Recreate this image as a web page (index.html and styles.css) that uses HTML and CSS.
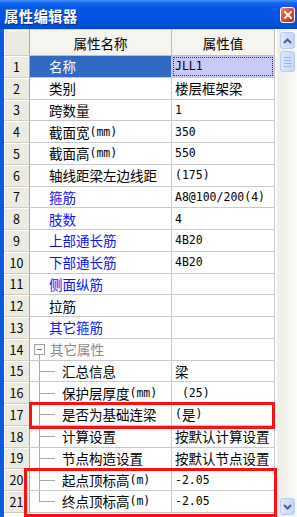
FILE: index.html
```html
<!DOCTYPE html>
<html lang="zh-CN">
<head>
    <meta charset="UTF-8">
    <meta name="viewport" content="width=device-width, initial-scale=1.0">
    <title>属性编辑器</title>
    <link rel="stylesheet" href="styles.css">
</head>
<body>
    <div class="window">
        <div class="titlebar">
            <span class="title">属性编辑器</span>
            <span class="close">
                <svg width="8" height="8" viewBox="0 0 8 8"><path d="M1 1L7 7M7 1L1 7" stroke="#fff" stroke-width="2" stroke-linecap="square"/></svg>
            </span>
        </div>

        <div class="frame">
            <div class="grid">
                <div class="row head">
                    <div class="num"></div>
                    <div class="name">属性名称</div>
                    <div class="val">属性值</div>
                </div>
                <div class="row selected">
                    <div class="num">1</div>
                    <div class="name">名称</div>
                    <div class="val"><span class="focus"><span class="en">JLL1</span></span></div>
                </div>
                <div class="row"><div class="num">2</div><div class="name">类别</div><div class="val">楼层框架梁</div></div>
                <div class="row"><div class="num">3</div><div class="name">跨数量</div><div class="val"><span class="en">1</span></div></div>
                <div class="row"><div class="num">4</div><div class="name">截面宽<span class="en">(mm)</span></div><div class="val"><span class="en">350</span></div></div>
                <div class="row"><div class="num">5</div><div class="name">截面高<span class="en">(mm)</span></div><div class="val"><span class="en">550</span></div></div>
                <div class="row"><div class="num">6</div><div class="name">轴线距梁左边线距</div><div class="val"><span class="en">(175)</span></div></div>
                <div class="row"><div class="num">7</div><div class="name link">箍筋</div><div class="val"><span class="en">A8@100/200(4)</span></div></div>
                <div class="row"><div class="num">8</div><div class="name link">肢数</div><div class="val"><span class="en">4</span></div></div>
                <div class="row"><div class="num">9</div><div class="name link">上部通长筋</div><div class="val"><span class="en">4B20</span></div></div>
                <div class="row"><div class="num">10</div><div class="name link">下部通长筋</div><div class="val"><span class="en">4B20</span></div></div>
                <div class="row"><div class="num">11</div><div class="name link">侧面纵筋</div><div class="val"></div></div>
                <div class="row"><div class="num">12</div><div class="name">拉筋</div><div class="val"></div></div>
                <div class="row"><div class="num">13</div><div class="name link">其它箍筋</div><div class="val"></div></div>
                <div class="row">
                    <div class="num">14</div>
                    <div class="name group"><span class="node"><span class="box"><span class="minus"></span></span></span><span class="group-label">其它属性</span></div>
                    <div class="val"></div>
                </div>
                <div class="row"><div class="num">15</div><div class="name tree"><span class="branch"></span>汇总信息</div><div class="val">梁</div></div>
                <div class="row"><div class="num">16</div><div class="name tree"><span class="branch"></span>保护层厚度<span class="en">(mm)</span></div><div class="val"><span class="en">&nbsp;(25)</span></div></div>
                <div class="row"><div class="num">17</div><div class="name tree"><span class="branch"></span>是否为基础连梁</div><div class="val"><span class="en">(</span>是<span class="en">)</span></div></div>
                <div class="row"><div class="num">18</div><div class="name tree"><span class="branch"></span>计算设置</div><div class="val">按默认计算设置</div></div>
                <div class="row"><div class="num">19</div><div class="name tree"><span class="branch"></span>节点构造设置</div><div class="val">按默认节点设置</div></div>
                <div class="row"><div class="num">20</div><div class="name tree"><span class="branch"></span>起点顶标高<span class="en">(m)</span></div><div class="val"><span class="en">-2.05</span></div></div>
                <div class="row"><div class="num">21</div><div class="name tree"><span class="branch last"></span>终点顶标高<span class="en">(m)</span></div><div class="val"><span class="en">-2.05</span></div></div>
            </div>

            <div class="gap"></div>

            <div class="scrollbar">
                <div class="sb-btn">
                    <svg width="9" height="6" viewBox="0 0 9 6"><path d="M1 5L4.5 1.5L8 5" fill="none" stroke="#4d6185" stroke-width="2"/></svg>
                </div>
                <div class="thumb"><span></span><span></span><span></span><span></span></div>
                <div class="track"></div>
                <div class="sb-btn">
                    <svg width="9" height="6" viewBox="0 0 9 6"><path d="M1 1L4.5 4.5L8 1" fill="none" stroke="#4d6185" stroke-width="2"/></svg>
                </div>
            </div>
        </div>

        <div class="mark mark-one"></div>
        <div class="mark mark-two"></div>
    </div>
</body>
</html>
```

FILE: styles.css
```css
body {
    margin: 0;
    padding: 0;
    overflow: hidden;
    background: #ffffff;
    font-family: "Noto Sans CJK SC", "Noto Sans", sans-serif;
    font-size: 13.5px;
    color: #000000;
}
.window {
    position: relative;
    width: 297px;
    height: 517px;
    overflow: hidden;
}
.titlebar {
    height: 29px;
    display: flex;
    align-items: center;
    justify-content: space-between;
    padding: 1px 2px 0 4px;
    box-sizing: border-box;
    background: linear-gradient(#4a93f7 0, #1065ec 3px, #0558e6 8px, #0153de 22px, #0049c9 29px); /* XP blue */
}
.title {
    color: #ffffff;
    font-weight: bold;
    font-size: 14.5px;
    letter-spacing: 0.2px;
    text-shadow: 1px 1px 0 #0a2f8a;
}
.close {
    width: 13px;
    height: 14px;
    display: flex;
    align-items: center;
    justify-content: center;
    border: 1px solid #ffffff;
    border-radius: 3px;
    background: linear-gradient(135deg, #f08a6b, #e0452b 50%, #c9321a);
}
.frame {
    display: flex;
    height: 488px;
    border-left: 4px solid #0b5be0;
    background: #ffffff;
}
.grid {
    width: 271px;
}
.row {
    display: grid;
    grid-template-columns: 26px 142px 103px;
    height: 21.75px;
}
.row > div {
    box-sizing: border-box;
    border-right: 1px solid #c9c9c9;
    border-bottom: 1px solid #c9c9c9;
    display: flex;
    align-items: center;
    white-space: nowrap;
    overflow: hidden;
}
.en {
    font-family: "DejaVu Sans Mono", monospace;
    font-size: 11.5px;
}
.row .num {
    justify-content: center;
    font-size: 12.5px;
    background: #ecebe2;
    box-shadow: inset 1px 1px 0 #ffffff;
    border-right: 1px solid #aca899;
    border-bottom: 1px solid #d2cfc2;
}
.row .name {
    padding-left: 19px;
}
.row .val {
    padding-left: 3px;
}
.head {
    height: 27px;
}
.head > div {
    background: #f5f4ef;
    border-top: 1px solid #d8d6cc;
    border-right: 1px solid #c2bfb2;
    border-bottom: 1px solid #c2bfb2;
    justify-content: center;
    padding-top: 1px;
}
.head .name, .head .val {
    padding-left: 0;
}
.selected .name {
    background: #316ac5; /* Selection Blue */
    color: #ffffff;
}
.selected .val {
    background: #c9c9f8; /* Lavender */
    padding: 1px;
}
.focus {
    display: flex;
    align-items: center;
    width: 100%;
    height: 100%;
    box-sizing: border-box;
    padding-left: 1px;
    border: 1px dotted #3a3a3a;
}
.link {
    color: #0a14f0;
}
.row .group {
    padding-left: 4px;
    color: #8a8a8a;
}
.node {
    align-self: stretch;
    width: 11px;
    display: flex;
    align-items: center;
    background: linear-gradient(#a8a8a8, #a8a8a8) 5px 100% / 1px 50% no-repeat;
}
.box {
    width: 9px;
    height: 9px;
    border: 1px solid #a0a0a0;
    background: #ffffff;
    display: flex;
    align-items: center;
    justify-content: center;
}
.minus {
    width: 5px;
    height: 1px;
    background: #707070;
}
.group-label {
    margin-left: 5px;
}
.row .tree {
    padding-left: 9px;
}
.branch {
    align-self: stretch;
    width: 16px;
    margin-right: 7px;
    margin-bottom: -1px;
    background:
        linear-gradient(#a8a8a8, #a8a8a8) 0 0 / 1px 100% no-repeat,
        linear-gradient(#a8a8a8, #a8a8a8) 0 50% / 100% 1px no-repeat;
}
.branch.last {
    background:
        linear-gradient(#a8a8a8, #a8a8a8) 0 0 / 1px 50% no-repeat,
        linear-gradient(#a8a8a8, #a8a8a8) 0 50% / 100% 1px no-repeat;
}
.gap {
    width: 2px;
}
.scrollbar {
    width: 20px;
    display: flex;
    flex-direction: column;
    align-items: center;
    padding: 3px 0 2px;
    box-sizing: border-box;
    background: linear-gradient(to right, #eeede6, #fbfbf8);
}
.sb-btn {
    width: 15px;
    height: 17px;
    box-sizing: border-box;
    border: 1px solid #b9cbf3;
    border-radius: 3px;
    background: linear-gradient(to right, #dde8fe, #c3d5fc);
    display: flex;
    align-items: center;
    justify-content: center;
}
.thumb {
    width: 15px;
    height: 21px;
    margin-top: 2px;
    box-sizing: border-box;
    border: 1px solid #b9cbf3;
    border-radius: 3px;
    background: linear-gradient(to right, #dde8fe, #c6d7fc);
    display: flex;
    flex-direction: column;
    align-items: center;
    justify-content: center;
    gap: 2px;
}
.thumb span {
    width: 7px;
    height: 1px;
    background: #9fb4e4;
}
.track {
    flex: 1;
}
.mark {
    position: absolute;
    box-sizing: border-box;
    border: 3px solid #ff0f0f;
}
.mark-one {
    left: 29px;
    top: 402px;
    width: 246px;
    height: 27px;
}
.mark-two {
    left: 24px;
    top: 468px;
    width: 253px;
    height: 49px;
}
```
